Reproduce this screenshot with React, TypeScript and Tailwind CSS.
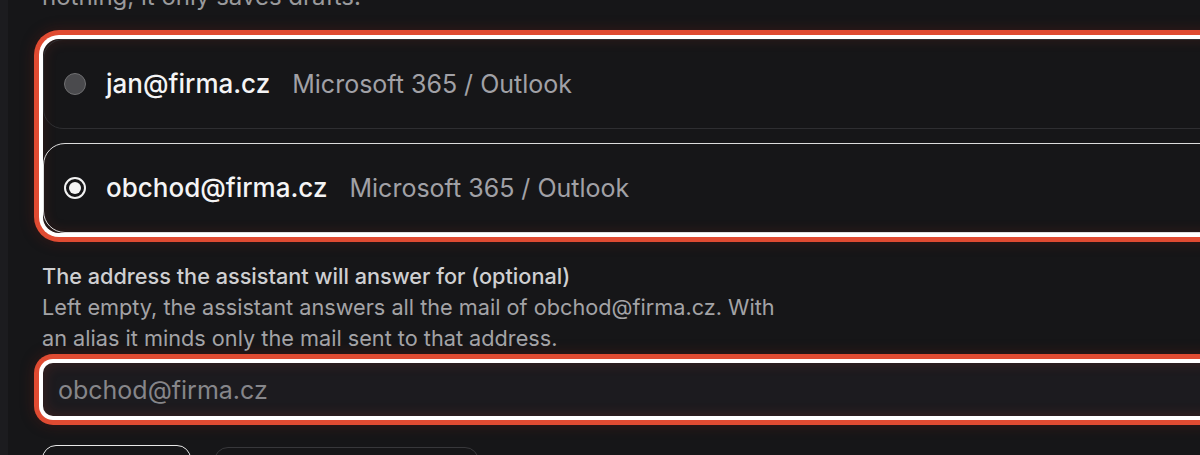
import { useState } from 'react'

const accounts = [
  { email: 'jan@firma.cz', provider: 'Microsoft 365 / Outlook' },
  { email: 'obchod@firma.cz', provider: 'Microsoft 365 / Outlook' },
]

function Radio({ checked }: { checked: boolean }) {
  if (checked) {
    return (
      <span className="flex h-[22px] w-[22px] shrink-0 items-center justify-center rounded-full border-2 border-[#f2f2f2] bg-[#161618]">
        <span className="h-[12px] w-[12px] rounded-full bg-[#f5f5f5]" />
      </span>
    )
  }
  return <span className="h-[22px] w-[22px] shrink-0 rounded-full border-[1.5px] border-[#707072] bg-[#4a4a4d]" />
}

export default function App() {
  const [selected, setSelected] = useState(1)

  return (
    <div className="flex h-[455px] w-[1200px] overflow-hidden bg-[#161618] font-['Inter',sans-serif]">
      <div className="w-[8px] shrink-0 bg-[#1c1c1f]" />
      <div className="w-[1400px] shrink-0 pl-[34px]">
        <p className="-mt-[19px] text-[24px] leading-[31px] text-[#9a9a9c]">nothing, it only saves drafts.</p>

        <div className="ml-px mt-[27px] flex flex-col gap-[14px] rounded-[16px] bg-[#161618] shadow-[0_0_0_4px_#ffffff,0_0_0_9px_#e04b32,0_0_14px_9px_rgba(120,30,20,0.35),inset_0_0_14px_rgba(200,60,40,0.18)]">
          {accounts.map((a, i) => (
            <button
              key={a.email}
              onClick={() => setSelected(i)}
              className={`flex h-[90px] items-center gap-[20px] pl-[20px] text-left ${
                selected === i
                  ? 'rounded-[22px] border border-[#dcdcdc]'
                  : 'rounded-[20px] border-[1.5px] border-[#2e2e31]'
              }`}
            >
              <Radio checked={selected === i} />
              <span className="flex items-baseline gap-[22px]">
                <span className="text-[26px] font-medium text-[#f4f4f5]">{a.email}</span>
                <span className="text-[25px] text-[#a1a1a6]">{a.provider}</span>
              </span>
            </button>
          ))}
        </div>

        <div className="mt-[28px] text-[21.7px] leading-[31px]">
          <p className="font-medium text-[#cfcfd1]">The address the assistant will answer for (optional)</p>
          <p className="w-[745px] text-[#a3a3a6]">
            Left empty, the assistant answers all the mail of obchod@firma.cz. With an alias it minds only the mail sent to that address.
          </p>
        </div>

        <input
          placeholder="obchod@firma.cz"
          className="ml-px mt-[9px] block h-[53px] w-[1300px] rounded-[10px] bg-[#1c1b1f] pl-[15px] text-[25px] text-[#e5e5e5] outline-none placeholder:text-[#86868a] shadow-[0_0_0_4px_#ffffff,0_0_0_9px_#e04b32,0_0_14px_9px_rgba(120,30,20,0.35),inset_0_0_14px_rgba(200,60,40,0.2)]"
        />

        <div className="mt-[29px] flex items-start gap-[23px]">
          <button className="h-[70px] w-[149px] rounded-[14px] border-[1.5px] border-[#e8e8e8] text-[22px] font-medium text-[#f4f4f5]">
            Save
          </button>
          <button className="mt-[2px] h-[70px] w-[265px] rounded-[14px] border-[1.5px] border-[#38383b] text-[22px] text-[#d4d4d8]">
            Disconnect account
          </button>
        </div>
      </div>
    </div>
  )
}
